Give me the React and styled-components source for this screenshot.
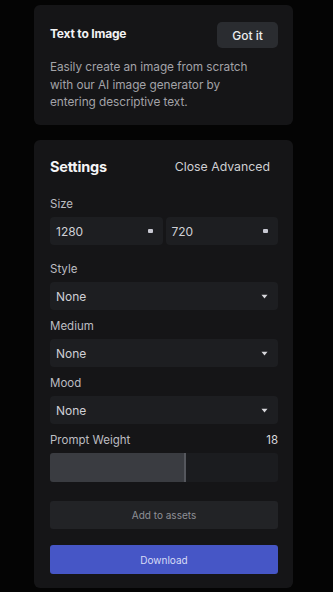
import React from "react";
import styled, { createGlobalStyle } from "styled-components";

const GlobalStyle = createGlobalStyle`
	html, body {
		margin: 0;
		padding: 0;
		background: #040404;
	}
	body {
		font-family: Inter, "Noto Sans", sans-serif;
		color: #e6e6e8;
	}
`;

const selects = [
	{ label: "Style", value: "None" },
	{ label: "Medium", value: "None" },
	{ label: "Mood", value: "None" },
];

function Caret() {
	return (
		<svg width='7' height='5' viewBox='0 0 7 5'>
			<path d='M0.5 0.8 L6.5 0.8 L3.5 4.4 Z' fill='#d8d8dc' />
		</svg>
	);
}

function App() {
	const weight = 18;

	return (
		<Page>
			<GlobalStyle />
			<IntroCard>
				<IntroHead>
					<IntroTitle>Text to Image</IntroTitle>
					<GotItButton>Got it</GotItButton>
				</IntroHead>
				<IntroText>Easily create an image from scratch with our AI image generator by entering descriptive text.</IntroText>
			</IntroCard>

			<SettingsCard>
				<SettingsHead>
					<SettingsTitle>Settings</SettingsTitle>
					<CloseLink>Close Advanced</CloseLink>
				</SettingsHead>

				<Field>
					<Label>Size</Label>
					<SizeRow>
						<Input>
							<span>1280</span>
							<Dot />
						</Input>
						<Input>
							<span>720</span>
							<Dot />
						</Input>
					</SizeRow>
				</Field>

				{selects.map((item) => (
					<Field key={item.label}>
						<Label>{item.label}</Label>
						<Input>
							<span>{item.value}</span>
							<Caret />
						</Input>
					</Field>
				))}

				<Field>
					<WeightHead>
						<Label>Prompt Weight</Label>
						<WeightValue>{weight}</WeightValue>
					</WeightHead>
					<Slider>
						<SliderFill style={{ width: "59.5%" }} />
					</Slider>
				</Field>

				<AssetsButton>Add to assets</AssetsButton>
				<DownloadButton>Download</DownloadButton>
			</SettingsCard>
		</Page>
	);
}

export default App;

const Page = styled.div`
	width: 333px;
	height: 592px;
	box-sizing: border-box;
	padding: 5px 40px 0 34px;
	display: flex;
	flex-direction: column;
	gap: 15px;
	overflow: hidden;
`;

const Card = styled.div`
	background: #151517;
	border-radius: 6px;
	box-sizing: border-box;
`;

const IntroCard = styled(Card)`
	height: 120px;
	padding: 17px 15px 0 16px;
`;

const IntroHead = styled.div`
	display: flex;
	align-items: center;
	justify-content: space-between;
`;

const IntroTitle = styled.div`
	font-size: 12px;
	font-weight: 700;
	color: #f2f2f4;
	letter-spacing: -0.2px;
	margin-top: -3px;
`;

const GotItButton = styled.button`
	width: 61px;
	height: 26px;
	border: none;
	border-radius: 5px;
	background: #2a2c30;
	color: #ececee;
	font-family: Inter, "Noto Sans", sans-serif;
	font-size: 12px;
	font-weight: 500;
	padding: 0;
`;

const IntroText = styled.p`
	margin: 11px 0 0;
	max-width: 214px;
	font-size: 11.8px;
	line-height: 17.5px;
	color: #a3a3a8;
	letter-spacing: -0.05px;
`;

const SettingsCard = styled(Card)`
	height: 448px;
	padding: 18px 15px 0 16px;
	display: flex;
	flex-direction: column;
`;

const SettingsHead = styled.div`
	display: flex;
	align-items: center;
	justify-content: space-between;
	padding-right: 8px;
	margin-bottom: 22px;
`;

const SettingsTitle = styled.div`
	font-size: 14.5px;
	font-weight: 700;
	color: #f4f4f6;
	letter-spacing: -0.2px;
`;

const CloseLink = styled.div`
	font-size: 12.3px;
	color: #cfcfd3;
`;

const Field = styled.div`
	display: flex;
	flex-direction: column;
	gap: 6px;
	margin-bottom: 9px;
`;

const Label = styled.div`
	font-size: 11.5px;
	color: #bdbdc2;
	line-height: 14px;
`;

const SizeRow = styled.div`
	display: grid;
	grid-template-columns: 1fr 1fr;
	gap: 3px;
	margin-bottom: 8px;
`;

const Input = styled.div`
	height: 28px;
	box-sizing: border-box;
	border-radius: 4px;
	background: #1d1e21;
	padding: 0 10px 0 6px;
	display: flex;
	align-items: center;
	justify-content: space-between;
	font-size: 12px;
	color: #cfd0d6;
`;

const Dot = styled.div`
	width: 5px;
	height: 4px;
	border-radius: 1px;
	background: #c8c8d2;
`;

const WeightHead = styled.div`
	display: flex;
	justify-content: space-between;
	align-items: center;
`;

const WeightValue = styled.div`
	font-size: 11.5px;
	color: #d8d8dc;
`;

const Slider = styled.div`
	height: 29px;
	border-radius: 3px;
	background: #1b1c1f;
	overflow: hidden;
	display: flex;
`;

const SliderFill = styled.div`
	height: 100%;
	background: #3a3c41;
	border-right: 2px solid #55575d;
	box-sizing: border-box;
`;

const AssetsButton = styled.button`
	margin-top: 10px;
	height: 28px;
	border: none;
	border-radius: 3px;
	background: #222326;
	color: #8f9096;
	font-family: Inter, "Noto Sans", sans-serif;
	font-size: 10px;
`;

const DownloadButton = styled.button`
	margin-top: 16px;
	height: 29px;
	border: none;
	border-radius: 3px;
	background: #4656c6;
	color: #d8dcf6;
	font-family: Inter, "Noto Sans", sans-serif;
	font-size: 10px;
`;
